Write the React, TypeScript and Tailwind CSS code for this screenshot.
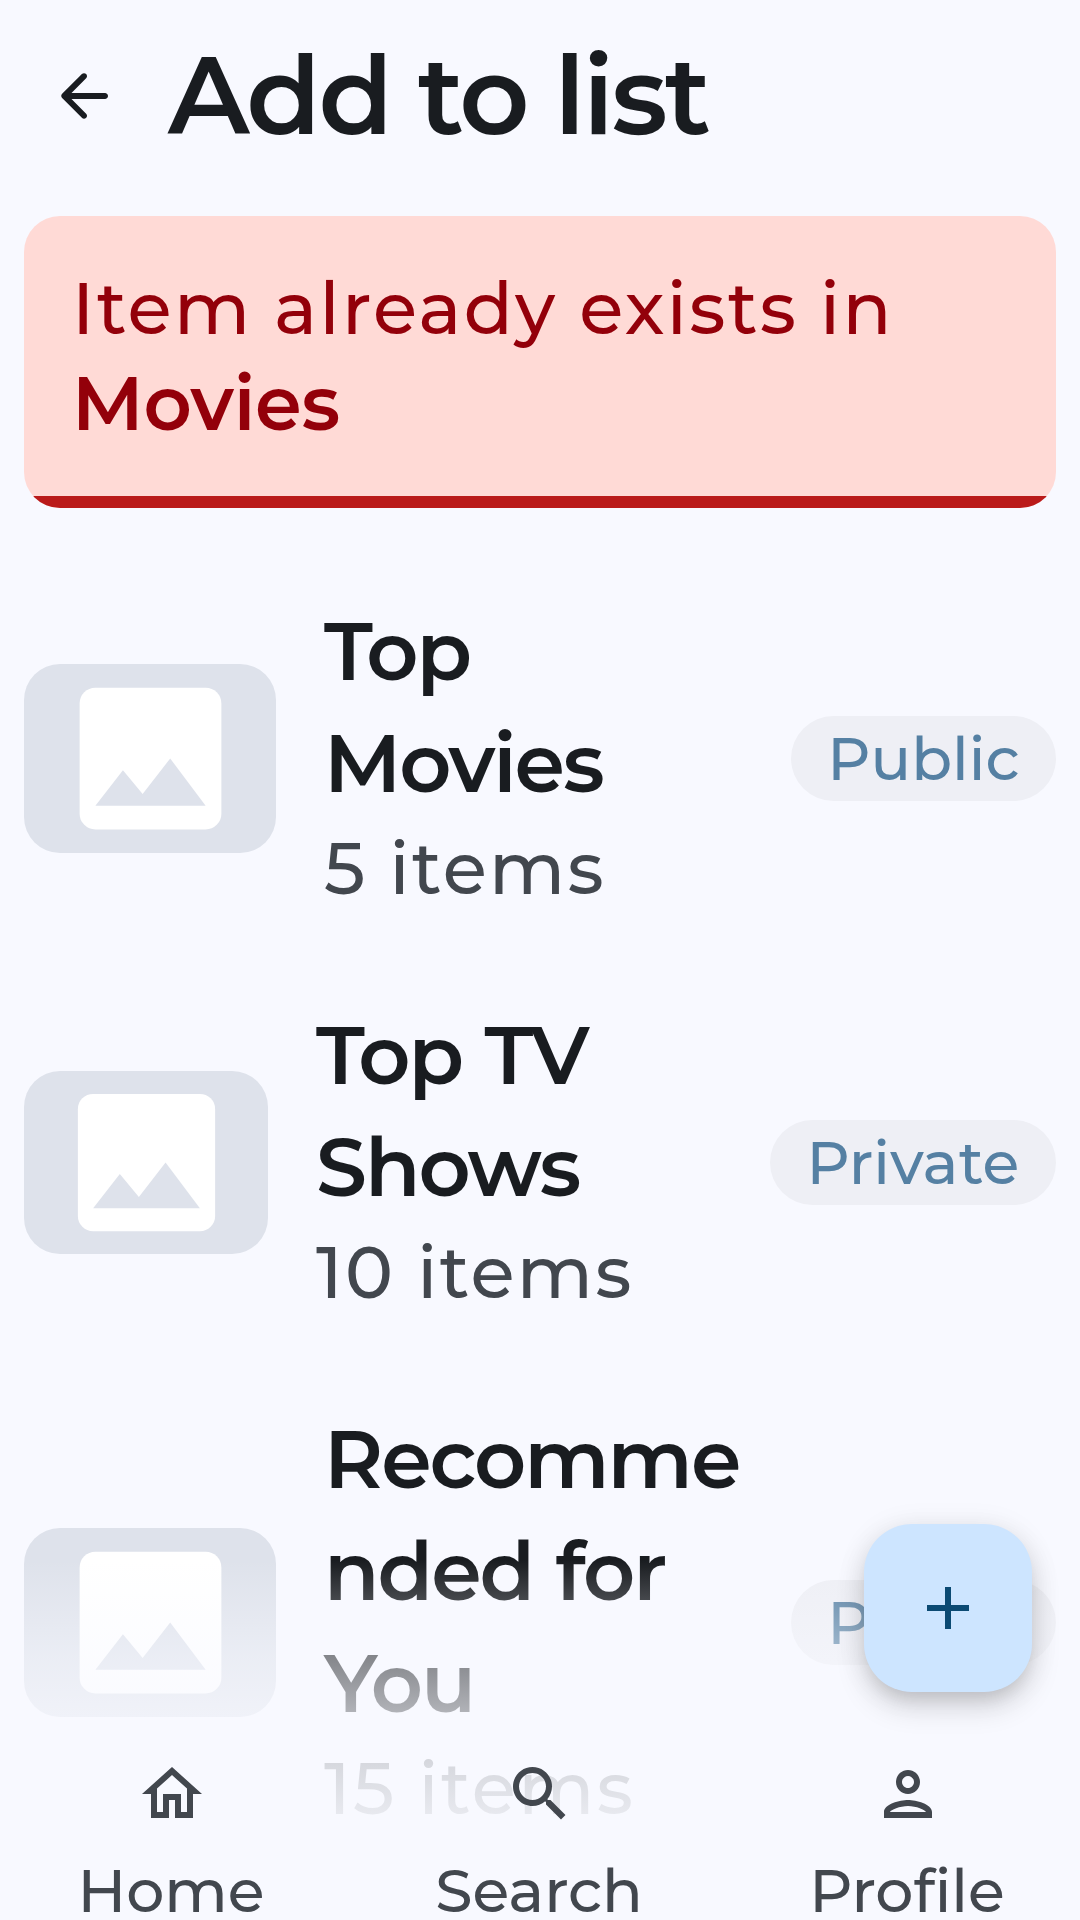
import type { ReactNode } from "react";

type ListEntry = {
  title: string;
  count: string;
  visibility: string;
  thumbClass: string;
  pillClass: string;
};

const lists: ListEntry[] = [
  { title: "Top Movies", count: "5 items", visibility: "Public", thumbClass: "w-[252px] h-[189px]", pillClass: "w-[265px]" },
  { title: "Top TV Shows", count: "10 items", visibility: "Private", thumbClass: "w-[244px] h-[183px]", pillClass: "w-[286px] tracking-[0.2px]" },
  { title: "Recommended for You", count: "15 items", visibility: "Public", thumbClass: "w-[252px] h-[189px]", pillClass: "w-[265px]" },
];

function Icon({ d, className }: { d: string; className: string }) {
  return (
    <svg viewBox="0 0 24 24" fill="currentColor" className={className}>
      <path d={d} />
    </svg>
  );
}

function Thumbnail({ className }: { className: string }) {
  return (
    <div className={`flex shrink-0 justify-center rounded-[36px] bg-[#dee2eb] ${className}`}>
      <svg viewBox="0 0 24 24" className="h-full">
        <rect x="3" y="3" width="18" height="18" rx="2" fill="#ffffff" />
        <path d="M8.5 13.5l2.5 3.01L14.5 12l4.5 6H5z" fill="#dee2eb" />
      </svg>
    </div>
  );
}

function ListRow({ entry }: { entry: ListEntry }) {
  return (
    <li className="flex items-center gap-12">
      <Thumbnail className={entry.thumbClass} />
      <div className="min-w-0 flex-1 pb-[5px]">
        <h2 className="text-[81px] leading-[112px] font-semibold tracking-[-2px] break-words text-[#191c20] [word-spacing:2px]">
          {entry.title}
        </h2>
        <p className="text-[72px] leading-[98px] font-medium tracking-[2.4px] whitespace-nowrap text-[#42474e]">
          {entry.count}
        </p>
      </div>
      <span
        className={`shrink-0 rounded-full bg-[#eeeff5] text-center text-[60px] leading-[85px] font-medium text-[#5580a3] ${entry.pillClass}`}
      >
        {entry.visibility}
      </span>
    </li>
  );
}

function NavItem({ icon, children }: { icon: ReactNode; children: string }) {
  return (
    <a className="flex flex-col items-center">
      {icon}
      <span className="mt-[31px] pr-0.5 text-[60px] leading-[59px] font-medium">{children}</span>
    </a>
  );
}

export default function App() {
  return (
    <div className="relative h-[1920px] w-[1080px] overflow-hidden bg-[#f8f9ff] font-['Montserrat','Inter',sans-serif]">
      <header className="flex h-48 gap-12 pl-12 text-[#191c20]">
        <Icon
          className="mt-[60px] size-[72px] shrink-0"
          d="M19 11H7.83l4.88-4.88c.39-.39.39-1.03 0-1.42-.39-.39-1.02-.39-1.41 0l-6.59 6.59c-.39.39-.39 1.02 0 1.41l6.59 6.59c.39.39 1.02.39 1.41 0 .39-.39.39-1.02 0-1.41L7.83 13H19c.55 0 1-.45 1-1s-.45-1-1-1z"
        />
        <h1 className="text-[109px] leading-[190px] font-semibold tracking-[-2.8px]">Add to list</h1>
      </header>

      <div className="mx-6 mt-6 flex h-[292px] flex-col justify-between overflow-hidden rounded-[36px] bg-[#ffdad6]">
        <p className="px-12 pt-11 text-[72px] leading-[96px] font-medium tracking-[2.35px] text-[#93000a]">
          Item already exists in{" "}
          <strong className="text-[75px] leading-none font-semibold tracking-[-0.2px]">Movies</strong>
        </p>
        <div className="h-3 bg-[#ba1a1a]" />
      </div>

      <ul className="mx-6 mt-[87px] flex flex-col gap-[77px]">
        {lists.map((entry) => (
          <ListRow key={entry.title} entry={entry} />
        ))}
      </ul>

      <div className="absolute inset-x-0 bottom-0 h-[360px] bg-[linear-gradient(to_bottom,#f8f9ff00_0px,#f8f9ff33_40px,#f8f9ff7a_96px,#f8f9ffad_152px,#f8f9ffd1_205px,#f8f9ffe8_254px,#f8f9ff_360px)]" />

      <button className="absolute top-[1524px] left-[864px] flex size-[168px] items-center justify-center rounded-[48px] bg-[#cde5ff] text-[#0b4a73] shadow-[0_12px_15px_-6px_rgba(0,0,0,0.08),0_15px_30px_0_rgba(0,0,0,0.14),0_3px_30px_0_rgba(0,0,0,0.08)]">
        <Icon className="size-[72px]" d="M19 13h-6v6h-2v-6H5v-2h6V5h2v6h6v2z" />
      </button>

      <nav className="absolute -inset-x-3 bottom-0 grid grid-cols-3 text-[#42474e]">
        <NavItem
          icon={
            <Icon
              className="size-[72px]"
              d="M12 5.69l5 4.5V18h-2v-6H9v6H7v-7.81l5-4.5M12 3L2 12h3v8h6v-6h2v6h6v-8h3L12 3z"
            />
          }
        >
          Home
        </NavItem>
        <NavItem
          icon={
            <Icon
              className="size-[72px]"
              d="M15.5 14h-.79l-.28-.27C15.41 12.59 16 11.11 16 9.5 16 5.91 13.09 3 9.5 3S3 5.91 3 9.5 5.91 16 9.5 16c1.61 0 3.09-.59 4.23-1.57l.27.28v.79l5 4.99L20.49 19l-4.99-5zm-6 0C7.01 14 5 11.99 5 9.5S7.01 5 9.5 5 14 7.01 14 9.5 11.99 14 9.5 14z"
            />
          }
        >
          Search
        </NavItem>
        <NavItem
          icon={
            <Icon
              className="size-[72px]"
              d="M12 6c1.1 0 2 .9 2 2s-.9 2-2 2-2-.9-2-2 .9-2 2-2m0 10c2.7 0 5.8 1.29 6 2H6c.23-.72 3.31-2 6-2m0-12C9.79 4 8 5.79 8 8s1.79 4 4 4 4-1.79 4-4-1.79-4-4-4zm0 10c-2.67 0-8 1.34-8 4v2h16v-2c0-2.66-5.33-4-8-4z"
            />
          }
        >
          Profile
        </NavItem>
      </nav>
    </div>
  );
}
